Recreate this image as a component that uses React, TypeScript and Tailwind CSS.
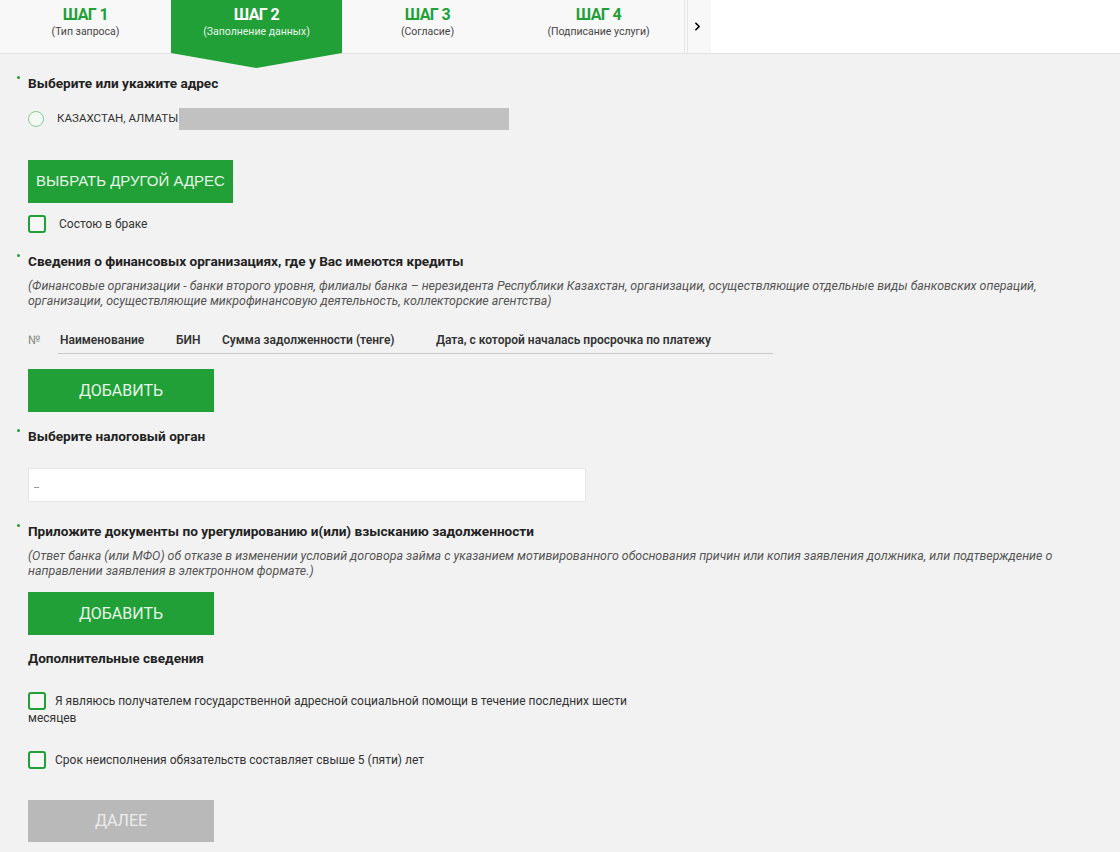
import { ChevronRight } from "lucide-react";

const steps = [
  { title: "ШАГ 1", sub: "(Тип запроса)" },
  { title: "ШАГ 2", sub: "(Заполнение данных)", active: true },
  { title: "ШАГ 3", sub: "(Согласие)" },
  { title: "ШАГ 4", sub: "(Подписание услуги)" },
];

function Title({ children, required = true }: { children: React.ReactNode; required?: boolean }) {
  return (
    <div className="relative text-[13.6px] leading-[20px] font-bold text-[#222]">
      {required && <span className="absolute -left-[11px] top-[3px] w-[3px] h-[3px] rounded-full bg-[#21a038]" />}
      {children}
    </div>
  );
}

function Checkbox() {
  return <span className="inline-block align-middle w-[18px] h-[18px] rounded-[3px] border-2 border-[#21a038] bg-[#f6f6f6]" />;
}

function GreenButton({ children, className = "" }: { children: React.ReactNode; className?: string }) {
  return (
    <button className={`flex items-center justify-center h-[43px] bg-[#21a038] text-[#e6f5e8] text-[16px] ${className}`}>
      {children}
    </button>
  );
}

export default function App() {
  return (
    <div className="min-h-[852px] bg-[#f2f2f2] font-['Roboto',sans-serif] text-[#333]">
      <div className="flex h-[54px] bg-white border-b border-[#e2e2e2]">
        <div className="flex bg-[#f8f8f8]">
          {steps.map((s) => (
            <div
              key={s.title}
              className={`relative flex w-[171px] flex-col items-center pt-[5px] ${s.active ? "bg-[#21a038] text-white" : "text-[#21a038]"}`}
            >
              <span className="text-[16px] leading-[20px] font-bold tracking-[-0.6px]">{s.title}</span>
              <span className={`text-[10.5px] leading-[14px] ${s.active ? "text-[#e8f6ea]" : "text-[#444]"}`}>{s.sub}</span>
              {s.active && (
                <div className="absolute top-full left-0 w-full h-[15px] bg-[#21a038] [clip-path:polygon(0_0,100%_0,50%_100%)]" />
              )}
            </div>
          ))}
          <div className="flex w-[27px] items-center justify-center border-l-[4px] border-double border-[#e6e6e6]">
            <ChevronRight className="w-[13px] h-[13px] -ml-[4px] text-black" strokeWidth={3} />
          </div>
        </div>
      </div>

      <div className="px-[28px] pb-[10px]">
        <div className="pt-[19px]">
          <Title>Выберите или укажите адрес</Title>
        </div>

        <div className="mt-[15px] flex h-[22px] items-center">
          <span className="w-[16px] h-[16px] rounded-full border-[1.5px] border-[#86cc91] bg-[#f3faf3]" />
          <span className="ml-[13px] text-[11.6px] text-[#333]">КАЗАХСТАН, АЛМАТЫ</span>
          <span className="ml-[1px] h-[22px] w-[330px] bg-[#c1c1c1]" />
        </div>

        <GreenButton className="mt-[30px] w-[205px] font-['Liberation_Sans',sans-serif] !text-[15px]">ВЫБРАТЬ ДРУГОЙ АДРЕС</GreenButton>

        <div className="mt-[12px] flex items-center gap-[13px] text-[12px]">
          <Checkbox />
          <span>Состою в браке</span>
        </div>

        <div className="mt-[18px]">
          <Title>Сведения о финансовых организациях, где у Вас имеются кредиты</Title>
        </div>
        <p className="mt-[7px] w-[1064px] text-[12.4px] leading-[15px] italic text-[#555]">
          (Финансовые организации - банки второго уровня, филиалы банка – нерезидента Республики Казахстан, организации, осуществляющие отдельные виды банковских операций, организации, осуществляющие микрофинансовую деятельность, коллекторские агентства)
        </p>

        <div className="mt-[22px] flex text-[12px] font-semibold leading-[20px] text-[#333]">
          <span className="w-[30px] text-[#888] font-normal">№</span>
          <div className="flex w-[715px] border-b border-[#c9c9c9] pb-[3px]">
            <span className="ml-[2px] w-[116px]">Наименование</span>
            <span className="w-[46px]">БИН</span>
            <span className="w-[214px]">Сумма задолженности (тенге)</span>
            <span>Дата, с которой началась просрочка по платежу</span>
          </div>
        </div>

        <GreenButton className="mt-[15px] w-[186px]">ДОБАВИТЬ</GreenButton>

        <div className="mt-[14px]">
          <Title>Выберите налоговый орган</Title>
        </div>
        <div className="mt-[22px] flex h-[34px] w-[558px] items-end border border-[#e6e6e6] bg-white px-[5px] pb-[7px] text-[9px] text-[#555]">
          --
        </div>

        <div className="mt-[19px]">
          <Title>Приложите документы по урегулированию и(или) взысканию задолженности</Title>
        </div>
        <p className="mt-[7px] w-[1064px] text-[12.4px] leading-[15px] italic text-[#555]">
          (Ответ банка (или МФО) об отказе в изменении условий договора займа с указанием мотивированного обоснования причин или копия заявления должника, или подтверждение о направлении заявления в электронном формате.)
        </p>

        <GreenButton className="mt-[14px] w-[186px]">ДОБАВИТЬ</GreenButton>

        <div className="mt-[13px]">
          <Title required={false}>Дополнительные сведения</Title>
        </div>

        <p className="mt-[24px] w-[640px] text-[12px] leading-[17px]">
          <Checkbox />
          <span className="ml-[9px] align-middle">
            Я являюсь получателем государственной адресной социальной помощи в течение последних шести месяцев
          </span>
        </p>

        <div className="mt-[24px] flex items-center gap-[9px] text-[12px]">
          <Checkbox />
          <span>Срок неисполнения обязательств составляет свыше 5 (пяти) лет</span>
        </div>

        <button className="mt-[31px] flex h-[42px] w-[186px] items-center justify-center bg-[#b9b9b9] text-[16px] text-[#ececec]">
          ДАЛЕЕ
        </button>
      </div>
    </div>
  );
}
